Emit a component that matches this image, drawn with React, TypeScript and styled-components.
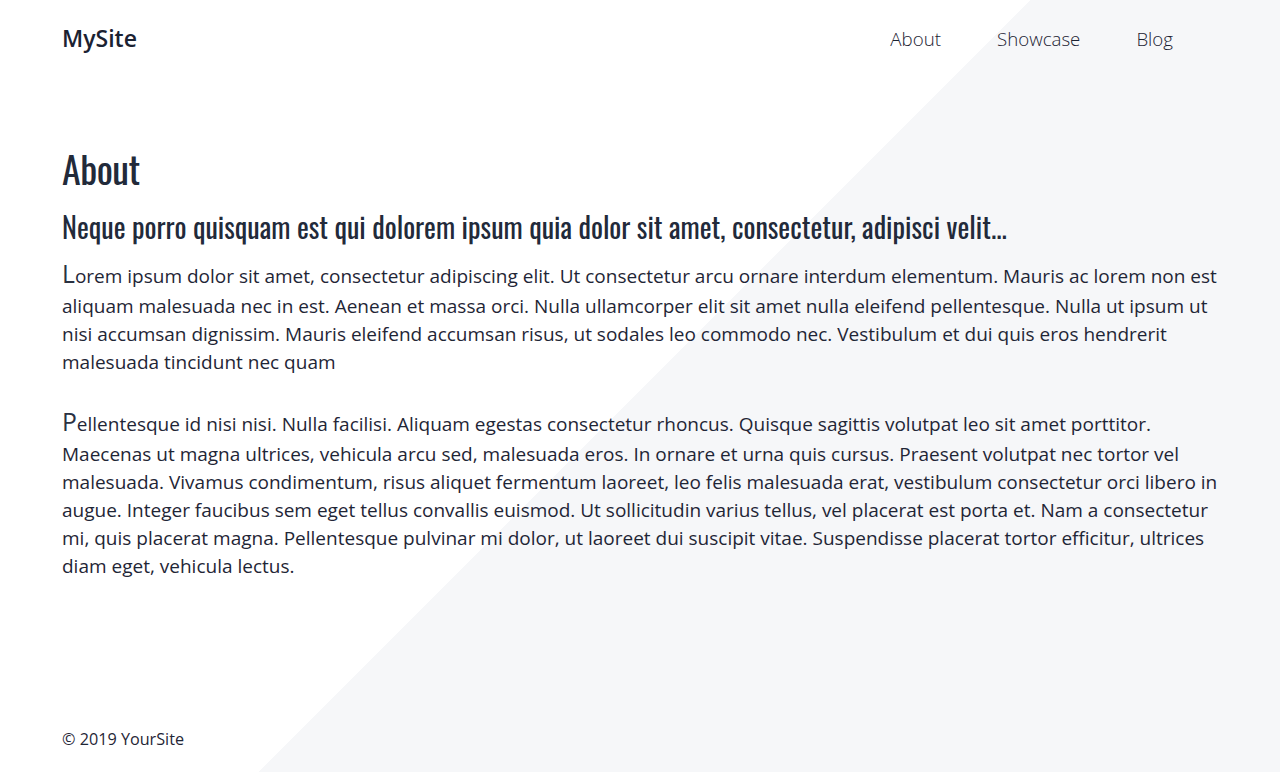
import React from "react";
import styled, { createGlobalStyle } from "styled-components";

const GlobalStyle = createGlobalStyle`
  html, body { margin: 0; padding: 0; }
  body {
    font-family: "Open Sans", "Liberation Sans", sans-serif;
    color: #1f2636;
    background: linear-gradient(135deg, #ffffff 50.2%, #f6f7f9 50.2%);
    min-height: 772px;
  }
  * { box-sizing: border-box; }
`;

const Page = styled.div`
  min-height: 772px;
  display: flex;
  flex-direction: column;
  padding: 0 62px;
`;

const Header = styled.header`
  height: 78px;
  display: flex;
  align-items: center;
  justify-content: space-between;
`;

const Brand = styled.a`
  font-size: 23px;
  line-height: 30px;
  font-weight: 600;
  color: #1b2232;
  text-decoration: none;
  margin-top: -2px;
`;

const Nav = styled.nav`
  display: flex;
  gap: 56px;
  margin-right: 45px;
  margin-top: -2px;
`;

const NavLink = styled.a`
  font-size: 18.7px;
  font-weight: 300;
  color: #1b2232;
  text-decoration: none;
`;

const Main = styled.main`
  flex: 1;
  padding-top: 68px;
`;

const Title = styled.h1`
  font-family: "Oswald", "Liberation Sans Narrow", "DejaVu Sans Condensed", sans-serif;
  font-weight: 400;
  font-size: 38px;
  line-height: 1.2;
  margin: 0 0 18px;
  color: #222a3a;
  letter-spacing: -0.5px;
`;

const Subtitle = styled.h2`
  font-family: "Oswald", "Liberation Sans Narrow", "DejaVu Sans Condensed", sans-serif;
  font-weight: 400;
  font-size: 28.2px;
  line-height: 1.2;
  margin: 0 0 13px;
  color: #222a3a;
`;

const Paragraph = styled.p`
  font-size: 19px;
  line-height: 28px;
  margin: 0 0 28px;
  color: #1f2636;

  &::first-letter {
    font-size: 1.3em;
    line-height: 36px;
    color: #2a3142;
  }
`;

const Footer = styled.footer`
  height: 44px;
  font-size: 16.2px;
  line-height: 22px;
  color: #1f2636;
`;

export default function App() {
  return (
    <>
      <GlobalStyle />
      <Page>
        <Header>
          <Brand href="#">MySite</Brand>
          <Nav>
            <NavLink href="#">About</NavLink>
            <NavLink href="#">Showcase</NavLink>
            <NavLink href="#">Blog</NavLink>
          </Nav>
        </Header>
        <Main>
          <Title>About</Title>
          <Subtitle>
            Neque porro quisquam est qui dolorem ipsum quia dolor sit amet, consectetur, adipisci velit...
          </Subtitle>
          <Paragraph>
            Lorem ipsum dolor sit amet, consectetur adipiscing elit. Ut consectetur arcu ornare interdum
            elementum. Mauris ac lorem non est aliquam malesuada nec in est. Aenean et massa orci. Nulla
            ullamcorper elit sit amet nulla eleifend pellentesque. Nulla ut ipsum ut nisi accumsan dignissim.
            Mauris eleifend accumsan risus, ut sodales leo commodo nec. Vestibulum et dui quis eros hendrerit
            malesuada tincidunt nec quam
          </Paragraph>
          <Paragraph>
            Pellentesque id nisi nisi. Nulla facilisi. Aliquam egestas consectetur rhoncus. Quisque sagittis
            volutpat leo sit amet porttitor. Maecenas ut magna ultrices, vehicula arcu sed, malesuada eros. In
            ornare et urna quis cursus. Praesent volutpat nec tortor vel malesuada. Vivamus condimentum, risus
            aliquet fermentum laoreet, leo felis malesuada erat, vestibulum consectetur orci libero in augue.
            Integer faucibus sem eget tellus convallis euismod. Ut sollicitudin varius tellus, vel placerat est
            porta et. Nam a consectetur mi, quis placerat magna. Pellentesque pulvinar mi dolor, ut laoreet dui
            suscipit vitae. Suspendisse placerat tortor efficitur, ultrices diam eget, vehicula lectus.
          </Paragraph>
        </Main>
        <Footer>© 2019 YourSite</Footer>
      </Page>
    </>
  );
}
